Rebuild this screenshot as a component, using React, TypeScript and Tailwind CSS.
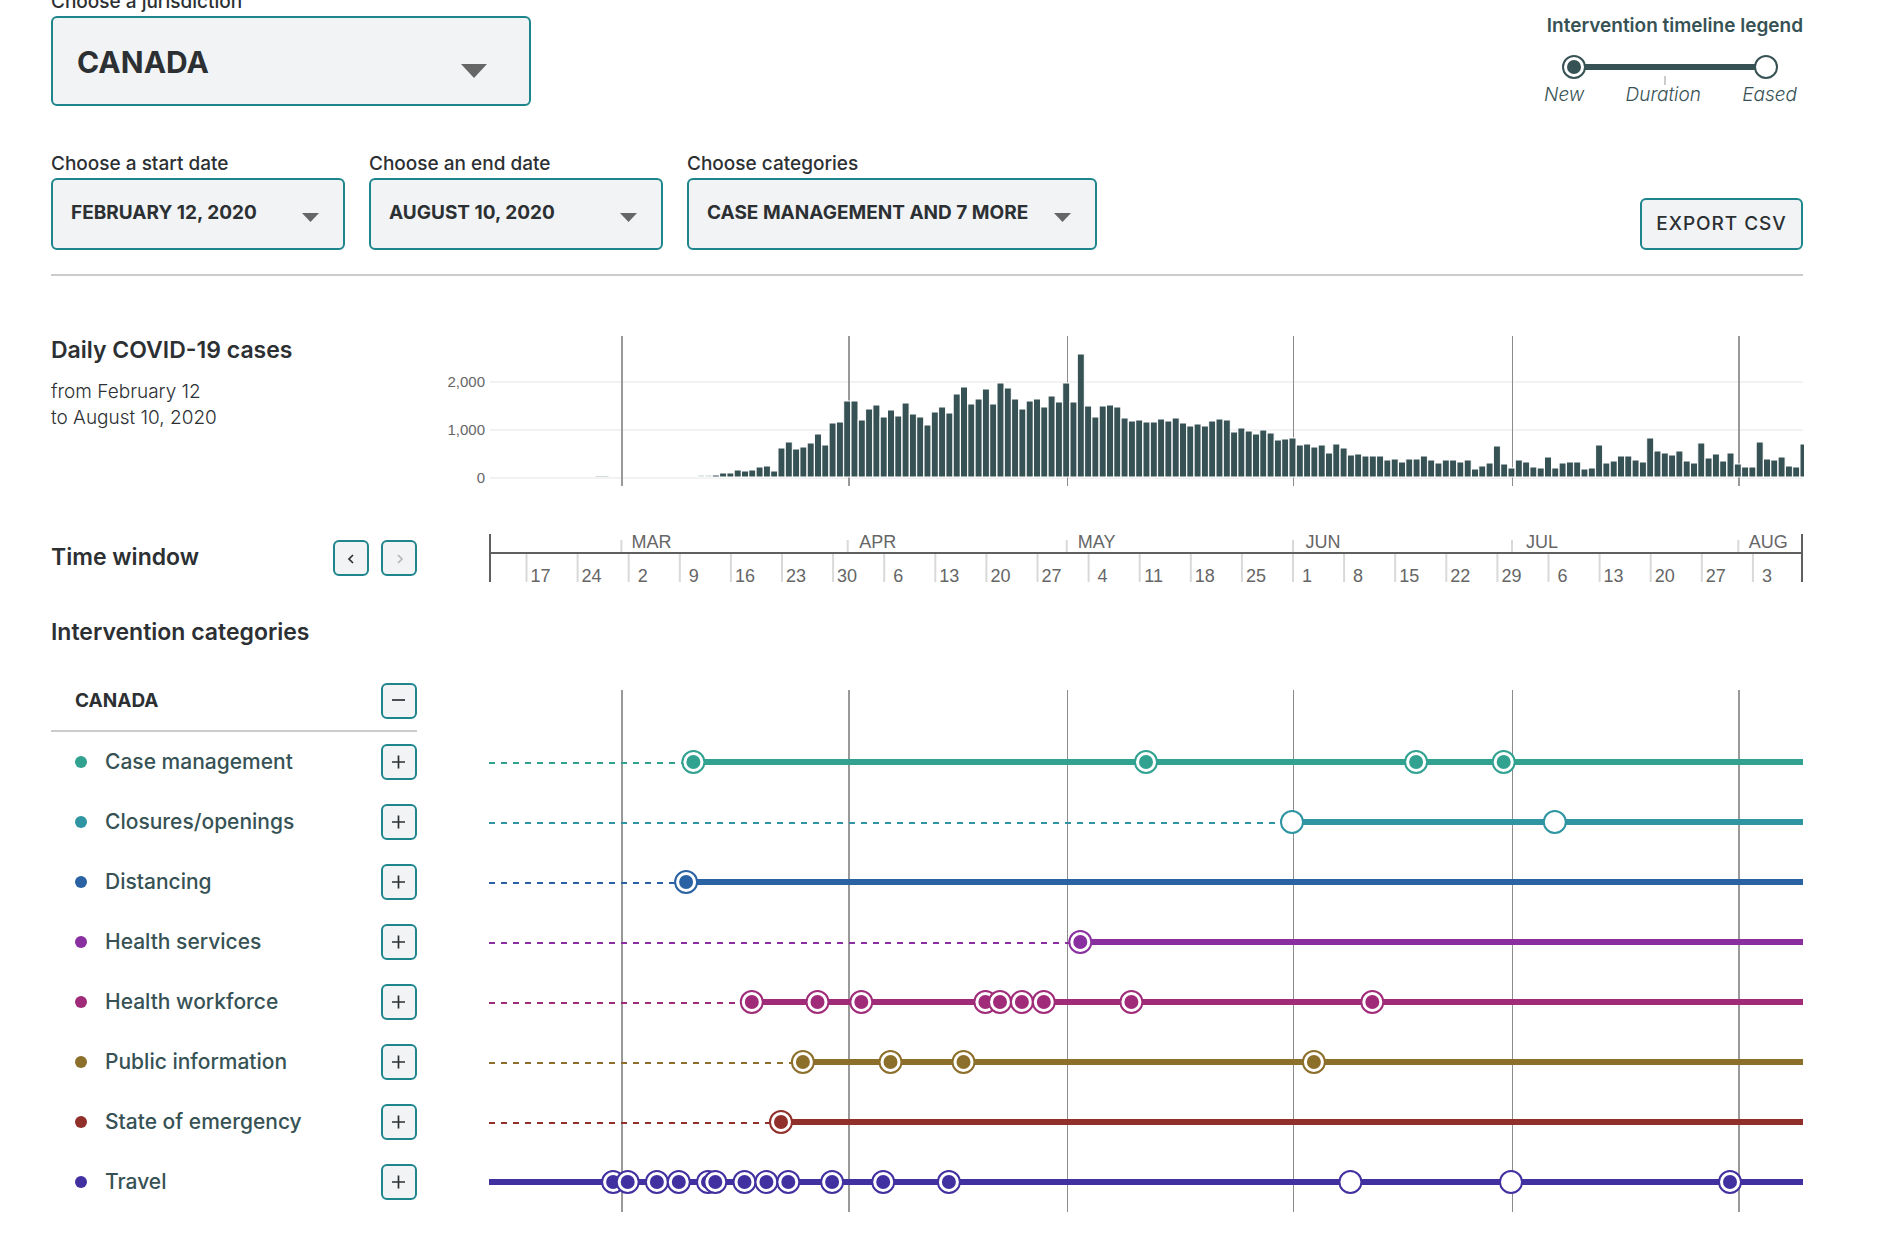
import { useState, type ReactNode } from 'react';

const TOTAL_DAYS = 180;
const pct = (day: number) => `${(day / TOTAL_DAYS) * 100}%`;

const FIRST_CASE_DAY = 29;
const CASES = [
  35, 42, 49, 76, 90, 153, 125, 139, 208, 236, 132, 604, 722, 583, 625, 708, 889, 660, 1125, 1139, 1590,
  1583, 1194, 1424, 1500, 1250, 1396, 1278, 1542, 1306, 1243, 1083, 1354, 1451, 1333, 1722, 1868, 1521, 1625,
  1833, 1521, 1958, 1847, 1618, 1417, 1576, 1625, 1458, 1688, 1563, 1951, 1563, 2556, 1472, 1257, 1472, 1500,
  1458, 1229, 1160, 1181, 1146, 1146, 1208, 1160, 1229, 1118, 1063, 1104, 1063, 1160, 1208, 1188, 944, 1021,
  965, 889, 979, 917, 771, 792, 813, 660, 681, 618, 667, 507, 688, 604, 451, 472, 438, 438, 438, 347, 368,
  319, 375, 368, 438, 354, 285, 347, 347, 306, 354, 167, 229, 285, 639, 264, 181, 347, 306, 208, 194, 417,
  188, 299, 306, 306, 160, 188, 667, 285, 333, 438, 431, 354, 306, 806, 549, 500, 458, 542, 326, 299, 708,
  396, 479, 333, 493, 264, 208, 201, 729, 368, 354, 417, 229, 201, 688,
];

const MONTHS = [
  { name: 'MAR', day: 18, wide: true },
  { name: 'APR', day: 49, wide: true },
  { name: 'MAY', day: 79, wide: false },
  { name: 'JUN', day: 110, wide: false },
  { name: 'JUL', day: 140, wide: false },
  { name: 'AUG', day: 171, wide: true },
];

const WEEKS = [
  17, 24, 2, 9, 16, 23, 30, 6, 13, 20, 27, 4, 11, 18, 25, 1, 8, 15, 22, 29, 6, 13, 20, 27, 3,
];

type Category = { name: string; color: string; added: number[]; eased?: number[]; startsEarlier?: boolean };

const CATEGORIES: Category[] = [
  { name: 'Case management', color: '#31a290', added: [28, 90, 127, 139] },
  { name: 'Closures/openings', color: '#2f95a3', added: [], eased: [110, 146] },
  { name: 'Distancing', color: '#2b62a4', added: [27] },
  { name: 'Health services', color: '#8a2f9f', added: [81] },
  { name: 'Health workforce', color: '#a02b78', added: [36, 45, 51, 68, 70, 73, 76, 88, 121] },
  { name: 'Public information', color: '#8d6f2c', added: [43, 55, 65, 113] },
  { name: 'State of emergency', color: '#912f2a', added: [40] },
  {
    name: 'Travel',
    color: '#41309f',
    added: [17, 19, 23, 26, 30, 31, 35, 38, 41, 47, 54, 63, 170],
    eased: [118, 140],
    startsEarlier: true,
  },
];

function MonthLines() {
  return (
    <g transform="translate(1 0)" shapeRendering="crispEdges">
      {MONTHS.map((m) => (
        <rect key={m.name} x={pct(m.day)} y="0" width={m.wide ? 2 : 1} height="100%" fill={m.wide ? '#999999' : '#8c8c8c'} />
      ))}
    </g>
  );
}

function Marker({ cx, cy, color, filled }: { cx: string | number; cy: number; color: string; filled: boolean }) {
  return (
    <>
      <circle cx={cx} cy={cy} r="11" fill="#fff" stroke={color} strokeWidth="2" />
      {filled && <circle cx={cx} cy={cy} r="7" fill={color} />}
    </>
  );
}

function Select({ id, label, value, className, large }: { id: string; label: string; value: string; className: string; large?: boolean }) {
  return (
    <div className={className}>
      <label htmlFor={id} className="mb-0.5 block text-[19px] leading-6 font-medium">
        {label}
      </label>
      <div className="relative">
        <select
          id={id}
          className={
            large
              ? 'block h-[90px] w-full appearance-none rounded-md border-2 border-[#1e858c] bg-[#f1f3f5] pt-0.5 pr-20 pl-6 text-[30px] font-bold'
              : 'block h-[72px] w-full appearance-none rounded-md border-2 border-[#1e858c] bg-[#f1f3f5] pr-12 pb-0.5 pl-[18px] text-[19px] font-bold'
          }
        >
          <option>{value}</option>
        </select>
        {large ? (
          <svg className="pointer-events-none absolute top-12 right-11" width="26" height="14" viewBox="0 0 26 14" aria-hidden="true">
            <path d="M0 0h26L13 14z" fill="#666" />
          </svg>
        ) : (
          <svg className="pointer-events-none absolute top-[35px] right-[26px]" width="17" height="9" viewBox="0 0 34 18" aria-hidden="true">
            <path d="M0 0h34L17 18z" fill="#666" />
          </svg>
        )}
      </div>
    </div>
  );
}

function SquareButton({ label, disabled, onClick, children }: { label: string; disabled?: boolean; onClick?: () => void; children: ReactNode }) {
  return (
    <button
      type="button"
      aria-label={label}
      disabled={disabled}
      onClick={onClick}
      className="flex size-9 shrink-0 items-center justify-center rounded-md border-2 border-[#1e858c] bg-[#f1f3f5] text-[#2c3033] disabled:text-[#b4b6b8]"
    >
      <svg width="32" height="32" viewBox="0 0 32 32" fill="none" stroke="currentColor" strokeWidth="1.700" aria-hidden="true">
        {children}
      </svg>
    </button>
  );
}

function Legend() {
  return (
    <section className="mt-6 w-[265px] text-[#375255]">
      <h2 className="flex justify-end text-[19px] leading-6 font-semibold whitespace-nowrap">Intervention timeline legend</h2>
      <svg className="mt-[17px] block w-full overflow-visible" height="30" viewBox="0 0 265 30" aria-hidden="true">
        <line x1="36" x2="228" y1="12" y2="12" stroke="#375255" strokeWidth="6" />
        <Marker cx={36} cy={12} color="#375255" filled />
        <Marker cx={228} cy={12} color="#375255" filled={false} />
        <line x1="127" x2="127" y1="21" y2="30" stroke="#cccccc" strokeWidth="2" />
      </svg>
      <div className="flex justify-between pr-1.5 pl-1.5 text-[19px] leading-5 font-light italic">
        <span>New</span>
        <span>Duration</span>
        <span>Eased</span>
      </div>
    </section>
  );
}

function CasesChart() {
  return (
    <svg className="block h-[150px] w-full overflow-visible" role="img" aria-label="Daily COVID-19 cases">
      {[
        { text: '2,000', y: 45 },
        { text: '1,000', y: 93 },
        { text: '0', y: 141 },
      ].map((tick) => (
        <g key={tick.text}>
          <text x="-4" y={tick.y + 6} textAnchor="end" fontSize="15" fill="#666" className="font-['Liberation_Sans',sans-serif]">
            {tick.text}
          </text>
          <line x1="1" x2="100%" y1={tick.y + 1} y2={tick.y + 1} stroke="#f2f2f2" strokeWidth="2" />
        </g>
      ))}
      <MonthLines />
      <svg x="1" y="0" width="100%" height="150">
        <g transform="translate(-4 0)">
          <rect x={pct(15)} y="140" width="13" height="1" fill="#d5dcdc" />
          {CASES.map((count, i) => {
            const h = Math.round((count * 48) / 1000);
            return (
              <rect key={i} x={pct(FIRST_CASE_DAY + i)} y={141 - h} width="7" height={h} fill={i < 2 ? '#c8d1d1' : '#375255'} stroke="#fff" strokeWidth="1" />
            );
          })}
        </g>
      </svg>
    </svg>
  );
}

function TimeAxis() {
  return (
    <svg className="block h-12 w-full overflow-visible font-['Liberation_Sans',sans-serif]" role="img" aria-label="Time axis, February 12 to August 10">
      <g transform="translate(1 0)">
        {MONTHS.map((m) => (
          <g key={m.name}>
            <line x1={pct(m.day)} x2={pct(m.day)} y1="6" y2="18" stroke="#d9d9d9" strokeWidth="2" />
            <text x={pct(m.day)} dx="30" y="14" textAnchor="middle" fontSize="18" fill="#666">
              {m.name}
            </text>
          </g>
        ))}
        {WEEKS.map((date, i) => (
          <g key={i}>
            <line x1={pct(5 + i * 7)} x2={pct(5 + i * 7)} y1="20" y2="48" stroke="#d9d9d9" strokeWidth="2" />
            <text x={pct(5 + i * 7)} dx="14" y="48" textAnchor="middle" fontSize="18" fill="#666">
              {date}
            </text>
          </g>
        ))}
      </g>
      <g fill="none" stroke="#5f5f5f" strokeWidth="2">
        <line x1="0" x2="100%" y1="19" y2="19" />
        <line x1="1" x2="1" y1="0" y2="48" />
        <line x1="100%" x2="100%" y1="0" y2="48" transform="translate(-1 0)" />
      </g>
    </svg>
  );
}

function CategoryTimeline({ category }: { category: Category }) {
  const { color, added, eased = [], startsEarlier } = category;
  const first = startsEarlier ? 0 : Math.min(...added, ...eased);
  return (
    <svg className="block h-[60px] w-full min-w-0 flex-1 overflow-visible" role="img" aria-label={`${category.name} timeline`}>
      {!startsEarlier && <line x1="0" x2={pct(first)} y1="31" y2="31" stroke={color} strokeWidth="2" strokeDasharray="6 6" />}
      <line x1={pct(first)} x2="100%" y1="30" y2="30" stroke={color} strokeWidth="6" />
      {added.map((day) => (
        <Marker key={day} cx={pct(day)} cy={30} color={color} filled />
      ))}
      {eased.map((day) => (
        <Marker key={day} cx={pct(day)} cy={30} color={color} filled={false} />
      ))}
    </svg>
  );
}

export default function App() {
  const [open, setOpen] = useState(true);
  return (
    <div className="overflow-hidden bg-white pr-[95px] pb-10 pl-[51px] font-['Inter',sans-serif] text-[#2c3033]">
      <header className="-mt-2.5 flex items-start justify-between">
        <Select id="jurisdiction" label="Choose a jurisdiction" value="CANADA" className="w-[480px]" large />
        <Legend />
      </header>

      <form className="mt-[46px] flex items-end gap-6 border-b-2 border-[#cccccc] pb-6">
        <Select id="start-date" label="Choose a start date" value="FEBRUARY 12, 2020" className="w-[294px]" />
        <Select id="end-date" label="Choose an end date" value="AUGUST 10, 2020" className="w-[294px]" />
        <Select id="categories" label="Choose categories" value="CASE MANAGEMENT AND 7 MORE" className="w-[410px]" />
        <button type="button" className="ml-auto h-[52px] w-[163px] rounded-md border-2 border-[#1e858c] bg-[#f1f3f5] text-[19px] font-medium tracking-wider whitespace-nowrap">
          EXPORT CSV
        </button>
      </form>

      <main>
        <section className="mt-[60px] flex gap-[72px]">
          <div className="w-[366px] shrink-0">
            <h2 className="text-[23px] leading-7 font-semibold">Daily COVID-19 cases</h2>
            <p className="mt-[15px] text-[19px] leading-[26px] font-light">
              from February 12
              <br />
              to August 10, 2020
            </p>
          </div>
          <div className="min-w-0 flex-1">
            <CasesChart />
          </div>
        </section>

        <section className="mt-12 flex items-center gap-[72px]">
          <div className="flex w-[366px] shrink-0 items-center gap-3">
            <h2 className="mr-auto pb-0.5 text-[23px] leading-7 font-semibold">Time window</h2>
            <SquareButton label="Previous time window">
              <path d="M18 13l-4 4 4 4" />
            </SquareButton>
            <SquareButton label="Next time window" disabled>
              <path d="M15 13l4 4-4 4" />
            </SquareButton>
          </div>
          <div className="min-w-0 flex-1">
            <TimeAxis />
          </div>
        </section>

        <section className="mt-9">
          <h2 className="text-[23px] leading-7 font-semibold">Intervention categories</h2>
          <div className="relative mt-[26px]">
            <svg className="absolute top-[18px] right-0 h-[calc(100%-18px)] w-[calc(100%-438px)] overflow-visible" aria-hidden="true">
              <MonthLines />
            </svg>
            <div className="flex h-[60px] w-[366px] items-center justify-between border-b-2 border-[#cccccc] pl-6">
              <h3 className="text-[19px] leading-6 font-bold">CANADA</h3>
              <SquareButton label={open ? 'Collapse Canada' : 'Expand Canada'} onClick={() => setOpen(!open)}>
                <path d="M9 15h13" />
              </SquareButton>
            </div>
            {open && (
              <ul className="relative">
                {CATEGORIES.map((category) => (
                  <li key={category.name} className="flex items-center gap-[72px]">
                    <div className="flex w-[366px] shrink-0 items-center pl-6">
                      <span className="mr-[18px] size-3 rounded-full" style={{ backgroundColor: category.color }} />
                      <h4 className="mr-auto text-[21px] leading-7 font-medium text-[#375255]">{category.name}</h4>
                      <SquareButton label={`Expand ${category.name}`}>
                        <path d="M9 16h13M15.500 9.500v13" />
                      </SquareButton>
                    </div>
                    <CategoryTimeline category={category} />
                  </li>
                ))}
              </ul>
            )}
          </div>
        </section>
      </main>
    </div>
  );
}
